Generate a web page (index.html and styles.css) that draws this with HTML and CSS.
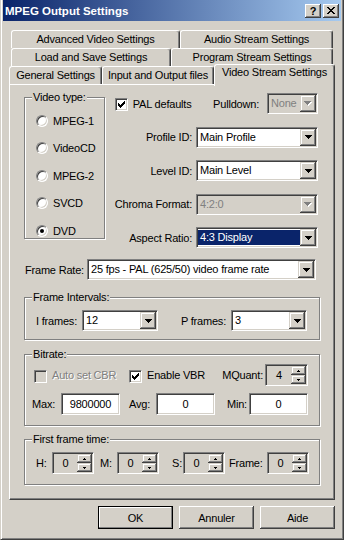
FILE: index.html
```html
<!DOCTYPE html>
<html lang="fr">
<head>
    <meta charset="UTF-8">
    <meta name="viewport" content="width=device-width, initial-scale=1.0">
    <title>MPEG Output Settings</title>
    <link rel="stylesheet" href="styles.css">
</head>
<body>
<div class="window">
    <!-- Title Bar -->
    <div class="titlebar">
        <span class="title">MPEG Output Settings</span>
        <div class="caption-buttons">
            <span class="caption-btn">?</span>
            <span class="caption-btn">
                <svg width="8" height="7" viewBox="0 0 8 7"><path d="M0 0h2v1H0z M6 0h2v1H6z M1 1h2v1H1z M5 1h2v1H5z M2 2h4v1H2z M3 3h2v1H3z M2 4h4v1H2z M1 5h2v1H1z M5 5h2v1H5z M0 6h2v1H0z M6 6h2v1H6z" fill="#000"/></svg>
            </span>
        </div>
    </div>

    <div class="dialog">
        <!-- Tabs -->
        <div class="tab-row row-advanced">
            <div class="tab">Advanced Video Settings</div>
            <div class="tab">Audio Stream Settings</div>
        </div>
        <div class="tab-row row-load">
            <div class="tab">Load and Save Settings</div>
            <div class="tab">Program Stream Settings</div>
        </div>
        <div class="tab-row row-general">
            <div class="tab">General Settings</div>
            <div class="tab">Input and Output files</div>
            <div class="tab active">Video Stream Settings</div>
        </div>

        <!-- Tab Page -->
        <div class="panel">
            <div class="top-section">
                <div class="group video-type">
                    <div class="group-title">Video type:</div>
                    <div class="radio-list">
                        <div class="radio-row"><span class="radio"></span>MPEG-1</div>
                        <div class="radio-row"><span class="radio"></span>VideoCD</div>
                        <div class="radio-row"><span class="radio"></span>MPEG-2</div>
                        <div class="radio-row"><span class="radio"></span>SVCD</div>
                        <div class="radio-row"><span class="radio checked"></span>DVD</div>
                    </div>
                </div>

                <div class="stream-fields">
                    <div class="field-row">
                        <span class="checkbox">
                            <svg width="7" height="7" viewBox="0 0 7 7"><path d="M6 0h1v1H6z M5 1h2v1H5z M0 2h1v1H0z M4 2h3v1H4z M0 3h2v1H0z M3 3h3v1H3z M0 4h5v1H0z M1 5h3v1H1z M2 6h1v1H2z" fill="#000"/></svg>
                        </span>
                        <span class="check-label">PAL defaults</span>
                        <span class="field-label pulldown-label">Pulldown:</span>
                        <div class="combo disabled w-pulldown">
                            <span class="combo-text">None</span>
                            <span class="drop-btn"><svg width="8" height="5" viewBox="0 0 8 5"><path d="M1 1h7v1H1z M2 2h5v1H2z M3 3h3v1H3z M4 4h1v1H4z" fill="#fff"/><path d="M0 0h7v1H0z M1 1h5v1H1z M2 2h3v1H2z M3 3h1v1H3z" fill="#808080"/></svg></span>
                        </div>
                    </div>
                    <div class="field-row align-right">
                        <span class="field-label">Profile ID:</span>
                        <div class="combo w-stream">
                            <span class="combo-text">Main Profile</span>
                            <span class="drop-btn"><svg width="7" height="4" viewBox="0 0 7 4"><path d="M0 0h7v1H0z M1 1h5v1H1z M2 2h3v1H2z M3 3h1v1H3z" fill="#000"/></svg></span>
                        </div>
                    </div>
                    <div class="field-row align-right">
                        <span class="field-label">Level ID:</span>
                        <div class="combo w-stream">
                            <span class="combo-text">Main Level</span>
                            <span class="drop-btn"><svg width="7" height="4" viewBox="0 0 7 4"><path d="M0 0h7v1H0z M1 1h5v1H1z M2 2h3v1H2z M3 3h1v1H3z" fill="#000"/></svg></span>
                        </div>
                    </div>
                    <div class="field-row align-right">
                        <span class="field-label">Chroma Format:</span>
                        <div class="combo disabled w-stream">
                            <span class="combo-text">4:2:0</span>
                            <span class="drop-btn"><svg width="8" height="5" viewBox="0 0 8 5"><path d="M1 1h7v1H1z M2 2h5v1H2z M3 3h3v1H3z M4 4h1v1H4z" fill="#fff"/><path d="M0 0h7v1H0z M1 1h5v1H1z M2 2h3v1H2z M3 3h1v1H3z" fill="#808080"/></svg></span>
                        </div>
                    </div>
                    <div class="field-row align-right">
                        <span class="field-label">Aspect Ratio:</span>
                        <div class="combo w-stream">
                            <span class="combo-text selected">4:3 Display</span>
                            <span class="drop-btn"><svg width="7" height="4" viewBox="0 0 7 4"><path d="M0 0h7v1H0z M1 1h5v1H1z M2 2h3v1H2z M3 3h1v1H3z" fill="#000"/></svg></span>
                        </div>
                    </div>
                </div>
            </div>

            <!-- Frame Rate -->
            <div class="frame-rate-row">
                <span class="frame-rate-label">Frame Rate:</span>
                <div class="combo w-framerate">
                    <span class="combo-text">25 fps - PAL (625/50) video frame rate</span>
                    <span class="drop-btn"><svg width="7" height="4" viewBox="0 0 7 4"><path d="M0 0h7v1H0z M1 1h5v1H1z M2 2h3v1H2z M3 3h1v1H3z" fill="#000"/></svg></span>
                </div>
            </div>

            <!-- Frame Intervals -->
            <div class="group intervals">
                <div class="group-title">Frame Intervals:</div>
                <div class="intervals-row">
                    <div class="pair">
                        <span class="pair-label">I frames:</span>
                        <div class="combo w-interval">
                            <span class="combo-text">12</span>
                            <span class="drop-btn"><svg width="7" height="4" viewBox="0 0 7 4"><path d="M0 0h7v1H0z M1 1h5v1H1z M2 2h3v1H2z M3 3h1v1H3z" fill="#000"/></svg></span>
                        </div>
                    </div>
                    <div class="pair">
                        <span class="pair-label">P frames:</span>
                        <div class="combo w-interval">
                            <span class="combo-text">3</span>
                            <span class="drop-btn"><svg width="7" height="4" viewBox="0 0 7 4"><path d="M0 0h7v1H0z M1 1h5v1H1z M2 2h3v1H2z M3 3h1v1H3z" fill="#000"/></svg></span>
                        </div>
                    </div>
                </div>
            </div>

            <!-- Bitrate -->
            <div class="group bitrate">
                <div class="group-title">Bitrate:</div>
                <div class="bitrate-row">
                    <div class="check-item auto-cbr">
                        <span class="checkbox disabled"></span>
                        <span class="check-label disabled-text">Auto set CBR</span>
                    </div>
                    <div class="check-item">
                        <span class="checkbox">
                            <svg width="7" height="7" viewBox="0 0 7 7"><path d="M6 0h1v1H6z M5 1h2v1H5z M0 2h1v1H0z M4 2h3v1H4z M0 3h2v1H0z M3 3h3v1H3z M0 4h5v1H0z M1 5h3v1H1z M2 6h1v1H2z" fill="#000"/></svg>
                        </span>
                        <span class="check-label">Enable VBR</span>
                    </div>
                    <span class="mquant-label">MQuant:</span>
                    <div class="spin w-mquant">
                        <span class="spin-value">4</span>
                        <span class="spin-buttons">
                            <span class="spin-btn"><svg width="3" height="2" viewBox="0 0 3 2"><path d="M1 0h1v1H1z M0 1h3v1H0z" fill="#000"/></svg></span>
                            <span class="spin-btn"><svg width="3" height="2" viewBox="0 0 3 2"><path d="M0 0h3v1H0z M1 1h1v1H1z" fill="#000"/></svg></span>
                        </span>
                    </div>
                </div>
                <div class="rates-row">
                    <span class="rate-label max-label">Max:</span>
                    <span class="edit">9800000</span>
                    <span class="rate-label avg-label">Avg:</span>
                    <span class="edit">0</span>
                    <span class="rate-label min-label">Min:</span>
                    <span class="edit">0</span>
                </div>
            </div>

            <!-- First frame time -->
            <div class="group first-frame">
                <div class="group-title">First frame time:</div>
                <div class="time-row">
                    <span class="time-label h-label">H:</span>
                    <div class="spin w-time">
                        <span class="spin-value">0</span>
                        <span class="spin-buttons">
                            <span class="spin-btn"><svg width="3" height="2" viewBox="0 0 3 2"><path d="M1 0h1v1H1z M0 1h3v1H0z" fill="#000"/></svg></span>
                            <span class="spin-btn"><svg width="3" height="2" viewBox="0 0 3 2"><path d="M0 0h3v1H0z M1 1h1v1H1z" fill="#000"/></svg></span>
                        </span>
                    </div>
                    <span class="time-label m-label">M:</span>
                    <div class="spin w-time">
                        <span class="spin-value">0</span>
                        <span class="spin-buttons">
                            <span class="spin-btn"><svg width="3" height="2" viewBox="0 0 3 2"><path d="M1 0h1v1H1z M0 1h3v1H0z" fill="#000"/></svg></span>
                            <span class="spin-btn"><svg width="3" height="2" viewBox="0 0 3 2"><path d="M0 0h3v1H0z M1 1h1v1H1z" fill="#000"/></svg></span>
                        </span>
                    </div>
                    <span class="time-label s-label">S:</span>
                    <div class="spin w-time">
                        <span class="spin-value">0</span>
                        <span class="spin-buttons">
                            <span class="spin-btn"><svg width="3" height="2" viewBox="0 0 3 2"><path d="M1 0h1v1H1z M0 1h3v1H0z" fill="#000"/></svg></span>
                            <span class="spin-btn"><svg width="3" height="2" viewBox="0 0 3 2"><path d="M0 0h3v1H0z M1 1h1v1H1z" fill="#000"/></svg></span>
                        </span>
                    </div>
                    <span class="time-label frame-label">Frame:</span>
                    <div class="spin w-time">
                        <span class="spin-value">0</span>
                        <span class="spin-buttons">
                            <span class="spin-btn"><svg width="3" height="2" viewBox="0 0 3 2"><path d="M1 0h1v1H1z M0 1h3v1H0z" fill="#000"/></svg></span>
                            <span class="spin-btn"><svg width="3" height="2" viewBox="0 0 3 2"><path d="M0 0h3v1H0z M1 1h1v1H1z" fill="#000"/></svg></span>
                        </span>
                    </div>
                </div>
            </div>
        </div>

        <!-- Dialog Buttons -->
        <div class="buttons">
            <span class="btn default">OK</span>
            <span class="btn">Annuler</span>
            <span class="btn">Aide</span>
        </div>
    </div>
</div>
</body>
</html>
```

FILE: styles.css
```css
/* General Reset */
body {
    margin: 0;
    background: #d4d0c8;
    font-family: "Liberation Sans", Arial, sans-serif;
    font-size: 11px;
    letter-spacing: -0.2px;
    white-space: nowrap;
    color: #000;
}

/* Window Frame */
.window {
    width: 344px;
    height: 540px;
    box-sizing: border-box;
    border: 1px solid #404040;
    border-top: none;
    border-left-color: #d4d0c8;
    box-shadow: inset 1px 0 #fff, inset -1px -1px #808080;
    padding: 0 2px 2px 2px;
    background: #d4d0c8;
}

/* Title Bar */
.titlebar {
    height: 21px;
    display: flex;
    align-items: center;
    padding: 0 2px;
    background: linear-gradient(to right, #0a246a, #a6caf0);
}

.title {
    flex: 1;
    color: #fff;
    font-weight: bold;
    font-size: 11.5px;
    letter-spacing: 0;
}

.caption-buttons {
    display: flex;
    gap: 2px;
}

.caption-btn {
    width: 16px;
    height: 14px;
    box-sizing: border-box;
    display: flex;
    align-items: center;
    justify-content: center;
    background: #d4d0c8;
    font-weight: bold;
    font-size: 11px;
    box-shadow: inset -1px -1px #404040, inset 1px 1px #fff, inset -2px -2px #808080;
}

/* Dialog Body */
.dialog {
    padding: 9px 6px 0 6px;
}

/* Tabs */
.tab-row {
    display: flex;
    height: 18px;
}

.row-advanced,
.row-load {
    margin-left: 2px;
}

.tab {
    box-sizing: border-box;
    height: 18px;
    border-top: 1px solid #fff;
    border-left: 1px solid #fff;
    border-right: 1px solid #404040;
    border-radius: 3px 3px 0 0;
    box-shadow: inset -1px 0 #808080;
    text-align: center;
    line-height: 17px;
    background: #d4d0c8;
}

.row-advanced .tab:nth-child(1) { width: 169px; }
.row-advanced .tab:nth-child(2) { width: 153px; }
.row-load .tab:nth-child(1) { width: 160px; }
.row-load .tab:nth-child(2) { width: 162px; }
.row-general .tab:nth-child(1) { width: 93px; }
.row-general .tab:nth-child(2) { width: 112px; }

.tab.active {
    width: 121px;
    height: 22px;
    margin-top: -2px;
    line-height: 15px;
    position: relative;
    z-index: 1;
}

/* Tab Page */
.panel {
    width: 326px;
    height: 416px;
    box-sizing: border-box;
    border-top: 1px solid #fff;
    border-left: 1px solid #fff;
    border-right: 1px solid #404040;
    border-bottom: 1px solid #404040;
    box-shadow: inset -1px -1px #808080;
    padding: 0 14px;
}

/* Group Boxes */
.group {
    box-sizing: border-box;
    border: 1px solid #808080;
    box-shadow: inset 1px 1px #fff, 1px 1px #fff;
}

.group-title {
    width: fit-content;
    height: 13px;
    line-height: 13px;
    margin: -7px 0 0 7px;
    padding: 0 1px;
    background: #d4d0c8;
}

/* Top Section */
.top-section {
    display: flex;
    align-items: flex-start;
}

.video-type {
    width: 85px;
    height: 142px;
    margin-top: 12px;
}

.radio-list {
    margin-top: 3px;
    padding-left: 11px;
}

.radio-row {
    display: flex;
    align-items: center;
    gap: 5px;
    height: 27.5px;
}

.radio {
    width: 12px;
    height: 12px;
    box-sizing: border-box;
    border-radius: 50%;
    border: 1px solid;
    border-color: #808080 #fff #fff #808080;
    box-shadow: inset 1px 1px #404040, inset -1px -1px #d4d0c8;
    background: #fff;
    display: flex;
    align-items: center;
    justify-content: center;
}

.radio.checked::after {
    content: "";
    width: 4px;
    height: 4px;
    border-radius: 50%;
    background: #000;
}

.stream-fields {
    flex: 1;
    display: flex;
    flex-direction: column;
    gap: 12.5px;
    margin-top: 8px;
    padding: 0 2px 0 10px;
}

.field-row {
    display: flex;
    align-items: center;
    height: 21px;
}

.field-row.align-right {
    justify-content: flex-end;
}

.field-label {
    margin-right: 4px;
}

.pulldown-label {
    margin-left: auto;
    margin-right: 8px;
}

/* Checkboxes */
.checkbox {
    width: 13px;
    height: 13px;
    flex: none;
    box-sizing: border-box;
    border: 1px solid;
    border-color: #808080 #fff #fff #808080;
    box-shadow: inset 1px 1px #404040, inset -1px -1px #d4d0c8;
    background: #fff;
    display: flex;
    align-items: center;
    justify-content: center;
    margin-top: 2px;
}

.checkbox.disabled {
    background: #d4d0c8;
}

.check-label {
    margin-left: 5px;
}

.disabled-text {
    color: #808080;
    text-shadow: 1px 1px #fff;
}

/* Combo Boxes */
.combo {
    display: flex;
    height: 21px;
    box-sizing: border-box;
    border: 1px solid;
    border-color: #808080 #fff #fff #808080;
    box-shadow: inset 1px 1px #404040, inset -1px -1px #d4d0c8;
    padding: 1px;
    background: #fff;
}

.combo.disabled {
    background: #d4d0c8;
    color: #808080;
}

.combo-text {
    flex: 1;
    line-height: 17px;
    padding-left: 2px;
    overflow: hidden;
}

.combo-text.selected {
    background: #0a246a;
    color: #fff;
    margin: 1px 0;
    line-height: 15px;
}

.drop-btn {
    width: 16px;
    height: 17px;
    box-sizing: border-box;
    display: flex;
    align-items: center;
    justify-content: center;
    background: #d4d0c8;
    box-shadow: inset -1px -1px #404040, inset 1px 1px #d4d0c8, inset -2px -2px #808080, inset 2px 2px #fff;
}

.w-pulldown { width: 51px; }
.w-stream { width: 122px; }
.w-framerate { width: 229px; }
.w-interval { width: 76px; }

/* Frame Rate */
.frame-rate-row {
    display: flex;
    align-items: center;
    margin-top: 11px;
}

.frame-rate-label {
    width: 62px;
    margin-left: 1px;
}

/* Frame Intervals */
.intervals {
    height: 43px;
    margin-top: 17px;
}

.intervals-row {
    display: flex;
    justify-content: space-between;
    margin-top: 6px;
    padding: 0 12px 0 11px;
}

.pair {
    display: flex;
    align-items: center;
}

.pair-label {
    margin-right: 5px;
}

/* Bitrate */
.bitrate {
    height: 72px;
    margin-top: 14px;
}

.bitrate-row {
    display: flex;
    align-items: center;
    margin-top: 3px;
    padding: 0 11px 0 9px;
}

.check-item {
    display: flex;
    align-items: center;
}

.auto-cbr {
    width: 95px;
}

.mquant-label {
    margin-left: auto;
    margin-right: 2px;
}

.rates-row {
    display: flex;
    align-items: center;
    margin-top: 7px;
    padding-left: 7px;
}

.rate-label { display: inline-block; }
.max-label { width: 29px; }
.avg-label { width: 27px; margin-left: 9px; }
.min-label { width: 22px; margin-left: 12px; }

.edit {
    width: 59px;
    height: 22px;
    box-sizing: border-box;
    border: 1px solid;
    border-color: #808080 #fff #fff #808080;
    box-shadow: inset 1px 1px #404040, inset -1px -1px #d4d0c8;
    background: #fff;
    text-align: center;
    line-height: 20px;
}

/* Spin Controls */
.spin {
    display: flex;
    height: 22px;
    box-sizing: border-box;
    border: 1px solid;
    border-color: #808080 #fff #fff #808080;
    box-shadow: inset 1px 1px #404040, inset -1px -1px #d4d0c8;
    padding: 1px;
    background: #d4d0c8;
}

.spin-value {
    flex: 1;
    text-align: center;
    line-height: 18px;
}

.spin-buttons {
    width: 15px;
    display: flex;
    flex-direction: column;
}

.spin-btn {
    flex: 1;
    display: flex;
    align-items: center;
    justify-content: center;
    box-shadow: inset -1px -1px #404040, inset 1px 1px #d4d0c8, inset -2px -2px #808080, inset 2px 2px #fff;
}

.w-mquant { width: 43px; }
.w-time { width: 42px; }

/* First frame time */
.first-frame {
    height: 46px;
    margin-top: 13px;
}

.time-row {
    display: flex;
    align-items: center;
    margin-top: 6px;
    padding-left: 11px;
}

.time-label { display: inline-block; }
.h-label { width: 16px; }
.m-label { width: 17px; margin-left: 6px; }
.s-label { width: 11px; margin-left: 13px; }
.frame-label { width: 38px; margin-left: 4px; }

/* Dialog Buttons */
.buttons {
    display: flex;
    justify-content: flex-end;
    gap: 6px;
    margin-top: 6px;
}

.btn {
    width: 75px;
    height: 23px;
    box-sizing: border-box;
    display: flex;
    align-items: center;
    justify-content: center;
    background: #d4d0c8;
    box-shadow: inset -1px -1px #404040, inset 1px 1px #fff, inset -2px -2px #808080;
}

.btn.default {
    border: 1px solid #000;
    box-shadow: inset -1px -1px #808080, inset 1px 1px #fff;
}
```
